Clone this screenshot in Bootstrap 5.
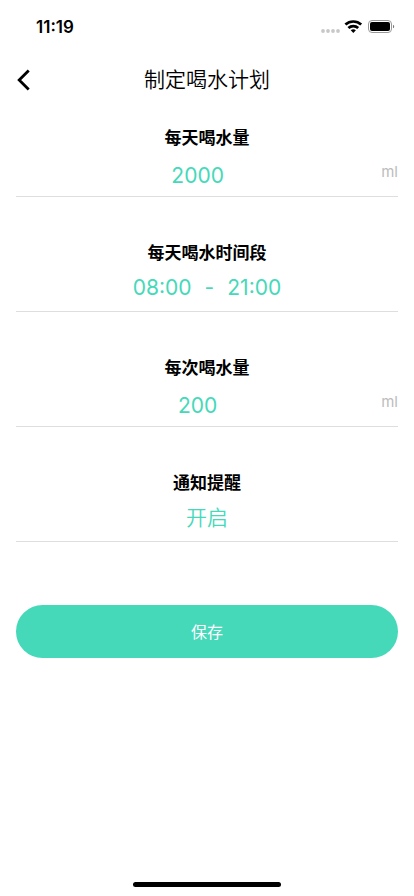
<!DOCTYPE html>
<html lang="zh-CN">
<head>
<meta charset="utf-8">
<meta name="viewport" content="width=device-width, initial-scale=1">
<title>制定喝水计划</title>
<link rel="stylesheet" href="https://cdn.jsdelivr.net/npm/bootstrap@5.3.0/dist/css/bootstrap.min.css">
<style>
  :root { --mint: #45d9b9; --rule: #dedede; --unit: #bcbcbc; }
  body { font-family: Inter, "Noto Sans CJK SC", sans-serif; color: #000; background: #fff; }
  .status-bar { height: 54px; padding: 0 19px 0 36px; }
  .status-time { font-size: 17px; line-height: 24px; }
  .app-bar { height: 52px; padding: 0 16px; }
  .app-bar h1 { font-size: 21px; line-height: 32px; font-weight: 350; }
  .back-btn { width: 40px; height: 40px; }
  .plan-form { padding: 0 16px; }
  .plan-field { height: 115px; border-bottom: 1px solid var(--rule); padding-top: 44px; }
  .plan-field:first-child { height: 91px; padding-top: 20px; }
  .field-label { font-size: 17px; line-height: 24px; font-weight: 700; }
  .field-value { font-size: 21px; line-height: 32px; font-weight: 350; color: var(--mint); }
  .amount-row { padding-top: 10px; }
  .amount-input { min-width: 0; outline-color: var(--mint); }
  .unit { font-size: 15px; line-height: 24px; color: var(--unit); padding-left: 2px; }
  .range-row { gap: 13px; padding-top: 7px; }
  .switch-btn { padding-top: 7px; }
  .save-btn { height: 53px; margin-top: 63px; font-size: 16px; background: var(--mint); color: #fff; }
  .save-btn:hover, .save-btn:active { background: #37c8a8 !important; color: #fff !important; }
  .home-bar { width: 148px; height: 5px; margin-bottom: 9px; }
</style>
<script defer src="https://cdn.jsdelivr.net/npm/bootstrap@5.3.0/dist/js/bootstrap.bundle.min.js"></script>
</head>
<body class="min-vh-100 d-flex flex-column">
  <div class="status-bar d-flex align-items-center justify-content-between">
    <span class="status-time fw-semibold">11:19</span>
    <svg width="75" height="16" viewBox="0 0 75 16" aria-hidden="true">
      <g fill="#c8c8c8"><circle cx="3" cy="12" r="1.9"/><circle cx="8" cy="12" r="1.9"/><circle cx="13" cy="12" r="1.9"/><circle cx="18" cy="12" r="1.9"/></g>
      <g fill="none" stroke="#000" stroke-width="2.7"><path d="M25.4 5.6a11.6 11.6 0 0 1 15.8 0"/><path d="M28.4 9a7.2 7.2 0 0 1 9.8 0"/></g>
      <path d="M30.7 11.3a3.9 3.9 0 0 1 5.2 0l-2.6 2.7z"/>
      <rect x="48.5" y="1.5" width="23" height="12" rx="3.5" fill="none" stroke="#999"/>
      <rect x="50" y="3" width="20" height="9" rx="2"/>
      <path d="M73 5.7v3.6c1.6-.5 1.6-3.1 0-3.6z" fill="#777"/>
    </svg>
  </div>
  <header class="app-bar d-flex align-items-center">
    <button type="button" class="back-btn btn border-0 p-0 d-flex align-items-center justify-content-start" aria-label="返回">
      <svg width="15" height="22" viewBox="0 0 15 22" fill="none" stroke="#000" stroke-width="2.8" aria-hidden="true"><path d="M12.7 1.5 3.2 11l9.5 9.5"/></svg>
    </button>
    <h1 class="flex-grow-1 text-center m-0">制定喝水计划</h1>
    <span class="back-btn"></span>
  </header>
  <form class="plan-form">
    <div class="plan-field">
      <label class="field-label d-block text-center" for="daily">每天喝水量</label>
      <div class="amount-row d-flex align-items-start">
        <input id="daily" class="amount-input field-value fw-normal flex-grow-1 border-0 bg-transparent p-0 text-center" type="text" inputmode="numeric" value="2000">
        <span class="unit">ml</span>
      </div>
    </div>
    <div class="plan-field">
      <div id="range-label" class="field-label text-center">每天喝水时间段</div>
      <div class="range-row field-value fw-normal d-flex justify-content-center" role="group" aria-labelledby="range-label">
        <button type="button" class="field-value fw-normal border-0 bg-transparent p-0">08:00</button>
        <span>-</span>
        <button type="button" class="field-value fw-normal border-0 bg-transparent p-0">21:00</button>
      </div>
    </div>
    <div class="plan-field">
      <label class="field-label d-block text-center" for="each">每次喝水量</label>
      <div class="amount-row d-flex align-items-start">
        <input id="each" class="amount-input field-value fw-normal flex-grow-1 border-0 bg-transparent p-0 text-center" type="text" inputmode="numeric" value="200">
        <span class="unit">ml</span>
      </div>
    </div>
    <div class="plan-field">
      <label class="field-label d-block text-center" for="notify">通知提醒</label>
      <button id="notify" type="button" class="switch-btn field-value d-block w-100 border-0 bg-transparent px-0 pb-0">开启</button>
    </div>
    <button type="submit" class="save-btn btn rounded-pill border-0 w-100 p-0">保存</button>
  </form>
  <div class="home-bar bg-black rounded-pill mx-auto mt-auto"></div>
</body>
</html>
